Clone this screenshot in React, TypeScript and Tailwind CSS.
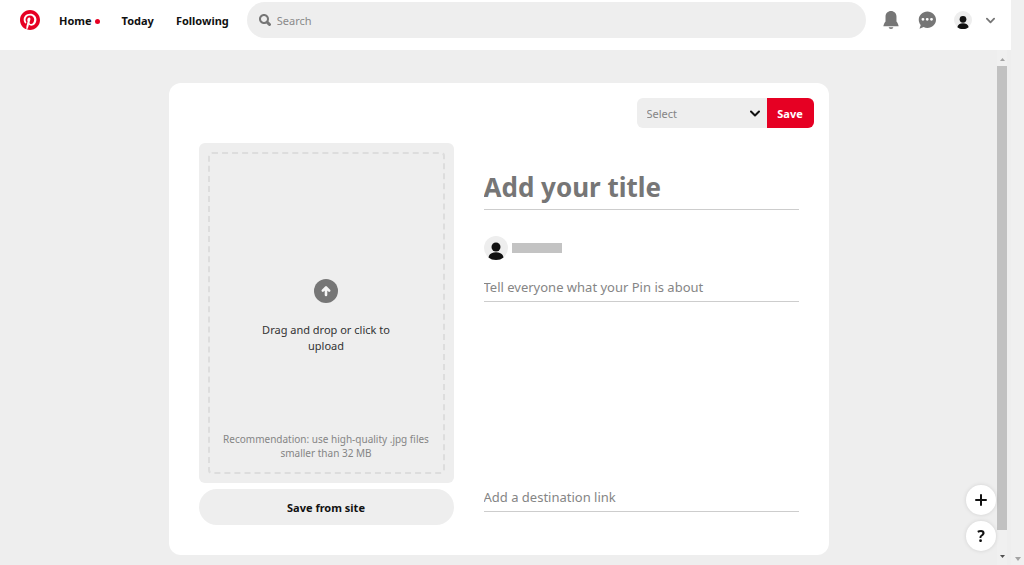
import { useState } from 'react';

const NAV_LINKS = [
  { label: 'Home', unread: true },
  { label: 'Today', unread: false },
  { label: 'Following', unread: false },
];

export default function App() {
  return (
    <div className="flex min-h-screen bg-[#eeeeee] font-['Noto_Sans','Open_Sans',sans-serif] text-[#111111]">
      <div className="flex min-w-0 flex-1 flex-col">
        <Header />
        <div className="flex flex-1">
          <main className="flex-1 px-4 pt-[33px] pb-[10px]">
            <PinBuilder />
          </main>
          <InnerScrollbar />
        </div>
      </div>

      {/* Outer scrollbar track */}
      <div className="flex w-[13px] shrink-0 flex-col items-center justify-end bg-[#f0f0f0] pb-1">
        <ArrowMark className="h-1 w-[6px] text-[#a3a3a3]" />
      </div>

      <FloatingActions />
    </div>
  );
}

// ---------------------------------------------------------------------------
// Header
// ---------------------------------------------------------------------------

function Header() {
  return (
    <header className="flex h-[50px] items-start bg-white pt-[2px] pr-4 pl-5">
      <a href="#home" aria-label="Pinterest" className="mt-2 mr-[19px] flex h-5 w-5 shrink-0">
        <PinterestLogo />
      </a>

      <nav className="mt-[9px] mr-[18px] flex h-5 items-center gap-[22px] text-[11px] font-bold">
        {NAV_LINKS.map((link) => (
          <a key={link.label} href={`#${link.label.toLowerCase()}`} className="flex items-center gap-[3px]">
            {link.label}
            {link.unread && <span className="h-[5px] w-[5px] rounded-full bg-[#e60023]" />}
          </a>
        ))}
      </nav>

      <label className="flex h-9 min-w-0 flex-1 items-center gap-[6px] rounded-full bg-[#eeeeee] px-3">
        <svg viewBox="0 0 24 24" className="h-3 w-3 shrink-0 text-[#767676]" fill="currentColor" aria-hidden="true">
          <path d="M10 16c-3.31 0-6-2.69-6-6s2.69-6 6-6 6 2.69 6 6-2.69 6-6 6m13.12 2.88l-4.26-4.26A9.842 9.842 0 0 0 20 10c0-5.52-4.48-10-10-10S0 4.48 0 10s4.48 10 10 10c1.67 0 3.24-.41 4.62-1.14l4.26 4.26a3 3 0 0 0 4.24 0 3 3 0 0 0 0-4.24" />
        </svg>
        <input
          type="text"
          aria-label="Search"
          placeholder="Search"
          className="min-w-0 flex-1 bg-transparent pt-[2px] text-[11px] outline-none placeholder:text-[#8a8a8a]"
        />
      </label>

      <div className="ml-4 flex h-9 items-center gap-[18px] text-[#767676]">
        <button type="button" aria-label="Notifications" className="flex h-[18px] w-[18px]">
          <svg viewBox="0 0 24 24" className="h-full w-full" fill="currentColor">
            <path d="M12 24c-1.700 0-3-1-3-2.200h6c0 1.200-1.300 2.200-3 2.200m7.300-10c1.500 1.500 2.500 4 2.900 6.400H1.800C2.200 18 3.200 15.500 4.700 14V7.200C4.700 3.200 8 0 12 0s7.300 3.200 7.300 7.200z" />
          </svg>
        </button>
        <button type="button" aria-label="Messages" className="flex h-[18px] w-[18px]">
          <svg viewBox="0 0 24 24" className="h-full w-full" fill="currentColor">
            <path d="M18 13a1.900 1.900 0 1 1 0-3.800A1.900 1.900 0 0 1 18 13m-5.700 0a1.900 1.900 0 1 1 0-3.800A1.900 1.900 0 0 1 12.300 13m-5.700 0a1.900 1.900 0 1 1 0-3.800A1.900 1.900 0 0 1 6.600 13M12.5.5C6.15.5 1 5.4 1 11.5c0 2.68 1 5.13 2.65 7.04L2 23.5l5.47-2.22c1.54.78 3.23 1.22 5.03 1.22C18.85 22.5 24 17.6 24 11.5S18.85.5 12.5.5" />
          </svg>
        </button>
        <button type="button" aria-label="Your profile" className="flex">
          <Avatar className="h-[18px] w-[18px]" />
        </button>
        <button type="button" aria-label="Accounts and more options" className="-ml-1 flex">
          <Chevron className="h-[9px] w-[9px]" />
        </button>
      </div>
    </header>
  );
}

// ---------------------------------------------------------------------------
// Pin builder card
// ---------------------------------------------------------------------------

function PinBuilder() {
  const [board, setBoard] = useState('');

  return (
    <form className="mx-auto max-w-[660px] rounded-xl bg-white pb-[30px]" onSubmit={(e) => e.preventDefault()}>
      <div className="flex justify-end p-[15px]">
        <div className="relative h-[30px] w-[130px]">
          <select
            aria-label="Board"
            value={board}
            onChange={(e) => setBoard(e.target.value)}
            className="h-full w-full appearance-none rounded-l-md bg-[#eeeeee] px-[10px] pt-[2px] text-[11px] text-[#858585] outline-none"
          >
            <option value="">Select</option>
          </select>
          <Chevron className="pointer-events-none absolute top-[11px] right-[7px] h-[9px] w-[10px] text-[#111111]" />
        </div>
        <button
          type="submit"
          className="h-[30px] w-[47px] rounded-r-md bg-[#e60023] pt-[2px] text-[11px] font-bold text-white"
        >
          Save
        </button>
      </div>

      <div className="flex gap-[30px] px-[30px]">
        <div className="flex w-[255px] shrink-0 flex-col gap-[6px]">
          <UploadArea />
          <button type="button" className="h-9 rounded-full bg-[#eeeeee] pt-[2px] text-[11px] font-bold">
            Save from site
          </button>
        </div>

        <div className="flex min-w-0 flex-1 flex-col pt-[22px] pb-[13px]">
          <input
            type="text"
            aria-label="Add your title"
            placeholder="Add your title"
            className="h-[45px] w-full border-b border-[#cdcdcd] text-[26px] font-bold outline-none placeholder:text-[#767676]"
          />
          <div className="mt-[26px] flex items-center gap-1">
            <Avatar className="h-6 w-6" />
            <span className="h-[10px] w-[50px] bg-[#c3c3c3]" />
          </div>
          <input
            type="text"
            aria-label="Tell everyone what your Pin is about"
            placeholder="Tell everyone what your Pin is about"
            className="mt-3 h-[30px] w-full border-b border-[#cdcdcd] text-[13px] outline-none placeholder:text-[#858585]"
          />
          <input
            type="text"
            aria-label="Add a destination link"
            placeholder="Add a destination link"
            className="mt-auto h-[30px] w-full border-b border-[#cdcdcd] text-[13px] outline-none placeholder:text-[#858585]"
          />
        </div>
      </div>
    </form>
  );
}

function UploadArea() {
  return (
    <button type="button" className="flex h-[340px] flex-col rounded-md bg-[#eeeeee] p-[9px]">
      <span className="flex w-full flex-1 flex-col items-center rounded-[4px] border-2 border-dashed border-[#dddddd] px-3 pt-[125px] pb-3">
        <svg viewBox="0 0 24 24" className="h-6 w-6" aria-hidden="true">
          <circle cx="12" cy="12" r="12" fill="#767676" />
          <path
            d="M12 16V9.500M8.800 11.600 12 8.400l3.200 3.200"
            fill="none"
            stroke="#f5f5f5"
            strokeWidth="2.600"
            strokeLinecap="round"
            strokeLinejoin="round"
          />
        </svg>
        <span className="mt-[19px] w-[140px] text-[11px] leading-4 text-[#333333]">
          Drag and drop or click to upload
        </span>
        <span className="mt-auto text-[10px] leading-[14px] text-[#858585]">
          Recommendation: use high-quality .jpg files smaller than 32 MB
        </span>
      </span>
    </button>
  );
}

// ---------------------------------------------------------------------------
// Scrollbar and floating buttons
// ---------------------------------------------------------------------------

function InnerScrollbar() {
  return (
    <div className="flex w-[14px] shrink-0 flex-col">
      <div className="flex w-[10px] flex-1 flex-col items-center bg-[#f0f0f0] pt-2 pb-[7px]">
        <ArrowMark className="h-[3px] w-[5px] rotate-180 text-[#a3a3a3]" />
        <div className="mt-[5px] mb-[25px] w-full flex-1 bg-[#c1c1c1]" />
        <ArrowMark className="h-[3px] w-[5px] text-[#505050]" />
      </div>
    </div>
  );
}

function FloatingActions() {
  const button =
    'flex h-[30px] w-[30px] items-center justify-center rounded-full bg-white shadow-[0_0_4px_rgba(0,0,0,0.12)]';

  return (
    <div className="fixed right-7 bottom-[14px] flex flex-col gap-[6px]">
      <button type="button" aria-label="Create" className={button}>
        <svg viewBox="0 0 12 12" className="h-3 w-3" stroke="currentColor" strokeWidth="2" strokeLinecap="round">
          <path d="M6 1v10M1 6h10" />
        </svg>
      </button>
      <button type="button" className={`${button} text-base font-bold`}>
        ?
      </button>
    </div>
  );
}

// ---------------------------------------------------------------------------
// Icons
// ---------------------------------------------------------------------------

function PinterestLogo() {
  return (
    <svg viewBox="0 0 24 24" className="h-full w-full" aria-hidden="true">
      <circle cx="12" cy="12" r="11" fill="#ffffff" />
      <path
        fill="#e60023"
        d="M0 12c0 5.123 3.211 9.497 7.730 11.218-.110-.937-.227-2.482.025-3.566.217-.932 1.401-5.938 1.401-5.938s-.357-.715-.357-1.774c0-1.660.962-2.900 2.161-2.900 1.020 0 1.512.765 1.512 1.682 0 1.025-.653 2.557-.990 3.978-.281 1.189.597 2.159 1.769 2.159 2.123 0 3.756-2.239 3.756-5.471 0-2.861-2.056-4.860-4.991-4.860-3.398 0-5.393 2.549-5.393 5.184 0 1.027.395 2.127.889 2.726a.360.360 0 0 1 .083.343c-.091.378-.293 1.189-.332 1.355-.053.218-.173.265-.400.159-1.492-.694-2.424-2.875-2.424-4.627 0-3.769 2.737-7.229 7.892-7.229 4.144 0 7.365 2.953 7.365 6.899 0 4.117-2.595 7.431-6.199 7.431-1.211 0-2.348-.630-2.738-1.373 0 0-.599 2.282-.744 2.840-.282 1.084-1.064 2.456-1.549 3.235C9.584 23.815 10.770 24 12 24c6.627 0 12-5.373 12-12S18.627 0 12 0 0 5.373 0 12"
      />
    </svg>
  );
}

function Avatar({ className }: { className: string }) {
  return (
    <svg viewBox="0 0 24 24" className={className} aria-hidden="true">
      <circle cx="12" cy="12" r="12" fill="#eeeeee" />
      <circle cx="12" cy="11" r="4.500" fill="#111111" />
      <path d="M4.500 21.500C5 18 8 16.300 12 16.300s7 1.700 7.500 5.200C17.500 23.200 15 24 12 24s-5.500-.8-7.500-2.500z" fill="#111111" />
    </svg>
  );
}

function Chevron({ className }: { className: string }) {
  return (
    <svg viewBox="0 0 10 9" className={className} fill="none" stroke="currentColor" strokeWidth="2" aria-hidden="true">
      <path d="M1 2.500l4 4 4-4" strokeLinecap="round" strokeLinejoin="round" />
    </svg>
  );
}

function ArrowMark({ className }: { className: string }) {
  return (
    <svg viewBox="0 0 6 4" className={className} fill="currentColor" preserveAspectRatio="none" aria-hidden="true">
      <path d="M0 0h6L3 4z" />
    </svg>
  );
}
